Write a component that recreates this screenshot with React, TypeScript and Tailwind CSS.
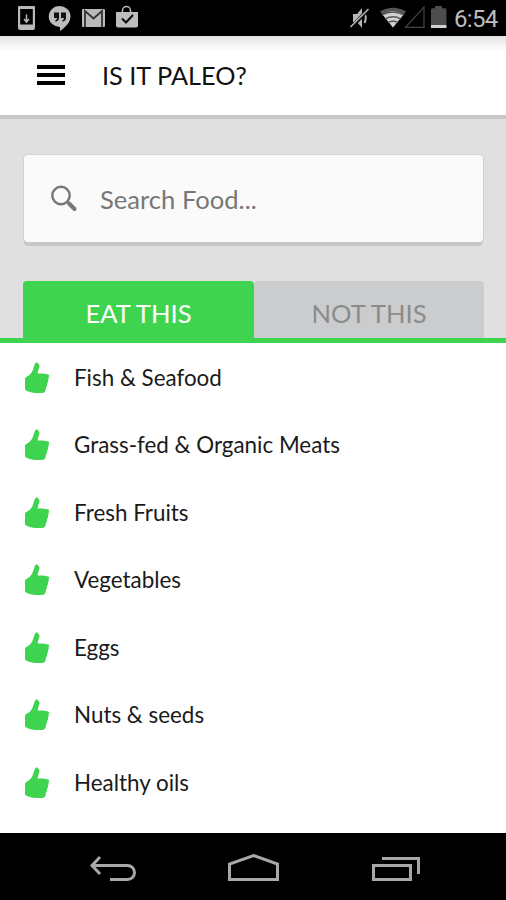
import { useState } from 'react';

const EAT = [
  'Fish & Seafood',
  'Grass-fed & Organic Meats',
  'Fresh Fruits',
  'Vegetables',
  'Eggs',
  'Nuts & seeds',
  'Healthy oils',
];

function StatusBar() {
  return (
    <div className="h-9 shrink-0 bg-black flex items-center justify-between text-[#bdbdbd]">
      <svg width="170" height="36" viewBox="0 0 170 36" fill="none">
        {/* download to device */}
        <path fill="#b9b9b9" fillRule="evenodd" d="M19 6h15q1 0 1 1v21q0 2-2 2H20q-2 0-2-2V7q0-1 1-1zm1.200 3v15.500h12.600V9z" />
        <path d="M26.500 14.500v7M24 19l2.500 3 2.500-3" stroke="#b9b9b9" strokeWidth="1.500" />
        {/* hangouts */}
        <path fill="#bdbdbd" d="M59.500 6a11 10.500 0 0 1 11 10.500c0 5.500-4.500 10.500-10.500 14.500v-4a11 10.500 0 1 1-.500-21z" />
        <path fill="#111" d="M54 12.500h5v5.500c0 2-1.500 3.500-3.500 3.700v-1.700c1-.300 1.500-1 1.500-2h-3zM61 12.500h5v5.500c0 2-1.500 3.500-3.500 3.700v-1.700c1-.300 1.500-1 1.500-2h-3z" />
        {/* mail */}
        <rect x="82" y="9" width="23" height="18" rx="1" fill="#b9b9b9" />
        <path d="M85 27V11l8.500 7.500L102 11v16" stroke="#333" strokeWidth="1.800" />
        {/* store bag */}
        <path fill="#bdbdbd" d="M116 12h22v13.500q0 2-2 2h-18q-2 0-2-2z" />
        <path d="M122.500 12v-1.500a4 4 0 0 1 8 0V12" stroke="#bdbdbd" strokeWidth="1.500" />
        <path d="M122 18.500l4 4 7-7.500" stroke="#111" strokeWidth="2.200" />
      </svg>
      <div className="flex items-center">
        <svg width="106" height="36" viewBox="348 0 106 36" fill="none">
          {/* muted */}
          <path fill="#b5b5b5" d="M353 14h4l5-6v20l-5-6h-4z" />
          <path d="M364.500 13q2.500 5 0 10" stroke="#b5b5b5" strokeWidth="2" />
          <path d="M351 28L368.500 9" stroke="#000" strokeWidth="3.500" />
          <path d="M350.500 27L368.500 9" stroke="#b5b5b5" strokeWidth="1.600" />
          {/* wifi */}
          <path fill="#555" d="M380 11.500Q393 4 406 11.500L393 27.500z" />
          <path fill="#d0d0d0" d="M382.500 14.500Q393 7.500 403.500 14.500L393 27.500z" />
          <path d="M382 15q11-6 22 0M385 19q8-4.500 16 0M388 22.500q5-2.500 10 0" stroke="#555" strokeWidth="1.300" />
          {/* signal */}
          <path d="M405.500 27.300H424V7z" stroke="#444" strokeWidth="1.200" />
          {/* battery */}
          <path fill="#4d4d4d" d="M435 6h7v2.200h3q1.500 0 1.500 1.500V25H431V9.700q0-1.500 1.500-1.500h2.500z" />
          <rect x="431" y="25" width="15.500" height="3" fill="#d0d0d0" />
        </svg>
        <span className="font-[Roboto,sans-serif] text-[24px] leading-9 w-[52px] pt-px tracking-[-0.700px]">6:54</span>
      </div>
    </div>
  );
}

function Header() {
  return (
    <header className="h-[83px] shrink-0 flex items-center border-b-4 border-[#c7c7c7] bg-linear-to-b from-[#e4e4e4] from-0% to-white to-20% pl-[37px] pb-0.5">
      <button className="flex flex-col gap-1" aria-label="Menu">
        <span className="block h-1 w-7 bg-black" />
        <span className="block h-1 w-7 bg-black" />
        <span className="block h-1 w-7 bg-black" />
      </button>
      <h1 className="ml-[37px] text-[25.300px] leading-8 text-[#111]">IS IT PALEO?</h1>
    </header>
  );
}

function SearchBox() {
  return (
    <div className="ml-6 mr-[23px] mt-9 h-[87px] rounded bg-[#fafafa] flex items-center pl-[26px] shadow-[0_4px_0_#c8c8c8,0_0_0_1px_#d2d2d2]">
      <svg width="28" height="28" viewBox="0 0 28 28" fill="none" stroke="#777">
        <circle cx="11" cy="10.500" r="8.700" strokeWidth="2.400" />
        <path d="M17 16.500l2 2" strokeWidth="2.800" />
        <path d="M19 18.500l5.500 5.500" strokeWidth="4" strokeLinecap="round" />
      </svg>
      <span className="ml-[22px] text-[25.600px] leading-8 text-[#777]">Search Food...</span>
    </div>
  );
}

function ThumbUp() {
  return (
    <svg width="26" height="34" viewBox="0 0 26 34" fill="#3fd450">
      <path d="M12.700 1.200c.800.600 2.800 1.900 2.800 3.600 0 2.200-1.900 4.900-1.800 7.700 3.500-.200 7.500 0 10.400.900 1.600.500 1.200 2 .400 2.600.500 1.300.200 2.600-.600 3.300.400 1.500 0 2.800-.900 3.700.200 1.500-.300 2.800-1.100 3.800 0 2.300-.700 4.600-2.400 4.900-3 .600-7 .500-10.500 0-2.800-.500-5.500-1.300-7.300-2.500-.700-.500-.700-1-.700-2V18.200c0-.900.400-1.500 1.300-2.100 2.300-1.400 4.200-2.700 5.300-4.600 1.500-2.500 1.800-5.300 3-7.800.500-1.100 1-2.200 2.100-2.500z" />
    </svg>
  );
}

function NavBar() {
  return (
    <div className="h-[67px] shrink-0 bg-black flex">
      <svg width="506" height="67" viewBox="0 833 506 67" fill="none" stroke="#a8a8a8" strokeWidth="3">
        <path d="M100 857l-8 8.500 8 8.500M92 865.500h35.500a7 7 0 0 1 0 14H110" />
        <path d="M229.500 879.500V864l24-8.500 24 8.500v15.500z" />
        <path d="M373.500 865.500h37v14h-37zM382 858.500h36.500V874" />
      </svg>
    </div>
  );
}

export default function App() {
  const [tab, setTab] = useState('eat');

  return (
    <div className="w-[506px] h-[900px] flex flex-col overflow-hidden bg-white font-[Lato,sans-serif]">
      <StatusBar />
      <Header />
      <div className="h-[224px] shrink-0 flex flex-col justify-between bg-[#e0e0e0] border-b-[5px] border-[#3fd450]">
        <SearchBox />
        <div className="ml-[23px] mr-[22px] flex h-[57px] text-[25.600px]">
          <button
            className="w-[231px] rounded-t bg-[#3fd450] text-white pt-2"
            onClick={() => setTab('eat')}
          >
            EAT THIS
          </button>
          <button
            className="flex-1 rounded-t bg-[#cbcccd] text-[#8a8c8c] pt-2"
            onClick={() => setTab('not')}
          >
            NOT THIS
          </button>
        </div>
      </div>
      <ul className="flex-1 pt-px">
        {tab === 'eat' &&
          EAT.map((food) => (
            <li key={food} className="h-[67.500px] flex items-center pl-6 text-[22.400px] text-[#1a1a1a]">
              <ThumbUp />
              <span className="ml-6">{food}</span>
            </li>
          ))}
      </ul>
      <NavBar />
    </div>
  );
}
